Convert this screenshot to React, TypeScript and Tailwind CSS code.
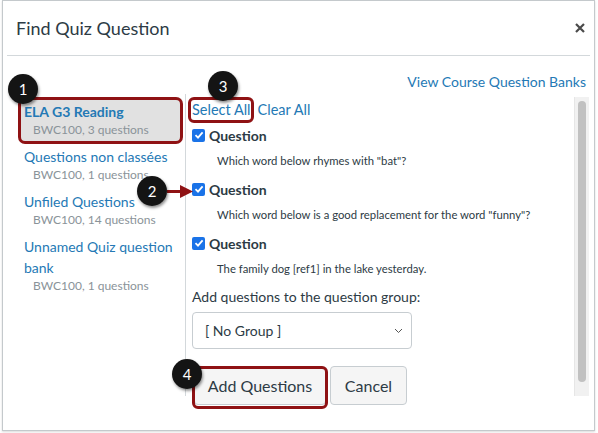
import React from 'react';

const banks = [
  { title: ['ELA G3 Reading'], meta: 'BWC100, 3 questions', active: true },
  { title: ['Questions non classées'], meta: 'BWC100, 1 questions' },
  { title: ['Unfiled Questions'], meta: 'BWC100, 14 questions' },
  { title: ['Unnamed Quiz question', 'bank'], meta: 'BWC100, 1 questions' },
];

const questions = [
  'Which word below rhymes with "bat"?',
  'Which word below is a good replacement for the word "funny"?',
  'The family dog [ref1] in the lake yesterday.',
];

function Checkbox() {
  return (
    <span className="w-[13px] h-[13px] rounded-[2px] bg-[#1a73e8] flex items-center justify-center shrink-0">
      <svg width="10" height="10" viewBox="0 0 10 10">
        <path d="M1.5 5.2 L4 7.6 L8.6 2.4" fill="none" stroke="white" strokeWidth="1.8" />
      </svg>
    </span>
  );
}

function Marker({ n, className }: { n: number; className: string }) {
  return (
    <div
      className={`absolute w-[30px] h-[30px] rounded-full bg-[#141414] text-white text-[15px] flex items-center justify-center shadow-[1px_2px_3px_rgba(0,0,0,0.45)] ${className}`}
    >
      {n}
    </div>
  );
}

export default function App() {
  return (
    <div className="relative w-[598px] h-[433px] bg-white font-['Lato','Noto_Sans',sans-serif] text-[#2d3b45] overflow-hidden">
      {/* dialog */}
      <div className="ml-[2px] w-[593px] h-[431px] border border-[#c4c9cc] shadow-[0_1px_2px_rgba(0,0,0,0.15)] flex flex-col">
        <div className="h-[54px] flex items-center justify-between pl-[13px] pr-[9px]">
          <h2 className="text-[18px] leading-none">Find Quiz Question</h2>
          <svg width="10" height="10" viewBox="0 0 10 10">
            <path d="M1 1 L9 9 M9 1 L1 9" stroke="#4a4a4a" strokeWidth="2.2" />
          </svg>
        </div>
        <div className="mx-[4px] h-px bg-[#d3d8db]" />

        <div className="flex justify-end pr-[8px] mt-[16px]">
          <span className="text-[14px] leading-[20px] text-[#2479b5]">View Course Question Banks</span>
        </div>

        <div className="flex flex-1 mt-[2px]">
          {/* banks */}
          <div className="ml-[4px] w-[179px] h-[302px] border-r border-[#d3d8db] pt-[3px]">
            {banks.map((b, i) => (
              <div
                key={i}
                className={`ml-[11px] w-[165px] py-[4px] pl-[6px] rounded-[6px] ${b.active ? 'bg-[#e1e1e1]' : ''}`}
              >
                {b.title.map(t => (
                  <div
                    key={t}
                    className={`text-[14px] leading-[21px] text-[#2479b5] ${b.active ? 'font-bold' : ''}`}
                  >
                    {t}
                  </div>
                ))}
                <div className="pl-[9px] text-[12px] leading-[16px] text-[#8a9399]">{b.meta}</div>
              </div>
            ))}
          </div>

          {/* questions */}
          <div className="flex-1 flex">
            <div className="flex-1 pl-[6px] pt-[6px]">
              <div className="flex gap-[7px] text-[14.5px] leading-[20px] text-[#2479b5]">
                <span>Select All</span>
                <span>Clear All</span>
              </div>
              <div className="mt-[5px] flex flex-col gap-[8px]">
                {questions.map(q => (
                  <div key={q}>
                    <div className="flex items-center gap-[4px] h-[20px]">
                      <Checkbox />
                      <span className="text-[14px] font-bold">Question</span>
                    </div>
                    <div className="mt-[6px] pl-[25px] text-[11.3px] leading-[20px]">{q}</div>
                  </div>
                ))}
              </div>
              <div className="mt-[8px] text-[14px] leading-[20px]">Add questions to the question group:</div>
              <div className="mt-[5px] w-[220px] h-[37px] border border-[#c7cdd1] rounded-[4px] flex items-center justify-between pl-[12px] pr-[8px]">
                <span className="text-[14px]">[ No Group ]</span>
                <svg width="9" height="6" viewBox="0 0 9 6">
                  <path d="M1 1 L4.5 4.5 L8 1" fill="none" stroke="#555" strokeWidth="1" />
                </svg>
              </div>
              <div className="mt-[17px] ml-[2px] flex gap-[4px]">
                <button className="h-[39px] w-[132px] bg-[#f5f5f5] border border-[#c7cdd1] rounded-[4px] text-[16px] text-[#2d3b45]">
                  Add Questions
                </button>
                <button className="h-[39px] w-[77px] bg-[#f5f5f5] border border-[#c7cdd1] rounded-[4px] text-[16px] text-[#2d3b45]">
                  Cancel
                </button>
              </div>
            </div>
            {/* scrollbar */}
            <div className="mt-[3px] mr-[5px] w-[15px] h-[299px] bg-[#f1f1f1] border-l border-[#e6e6e6] flex justify-center pt-[4px]">
              <div className="w-[8px] h-[281px] rounded-full bg-[#c1c1c1]" />
            </div>
          </div>
        </div>
      </div>

      {/* annotations */}
      <div className="absolute left-[18px] top-[97px] w-[165px] h-[47px] border-[3px] border-[#8f1214] rounded-[7px]" />
      <div className="absolute left-[188px] top-[97px] w-[66px] h-[26px] border-[3px] border-[#8f1214] rounded-[6px]" />
      <div className="absolute left-[192px] top-[366px] w-[136px] h-[43px] border-[3px] border-[#8f1214] rounded-[6px]" />
      <div className="absolute left-[167px] top-[189.5px] w-[16px] h-[3px] bg-[#8f1214]" />
      <svg className="absolute left-[180px] top-[185px]" width="13" height="13" viewBox="0 0 13 13">
        <path d="M0 0 L13 6.5 L0 13 Z" fill="#8f1214" />
      </svg>
      <Marker n={1} className="left-[8px] top-[74px]" />
      <Marker n={2} className="left-[137px] top-[176px]" />
      <Marker n={3} className="left-[208px] top-[71px]" />
      <Marker n={4} className="left-[172px] top-[359px]" />
    </div>
  );
}
